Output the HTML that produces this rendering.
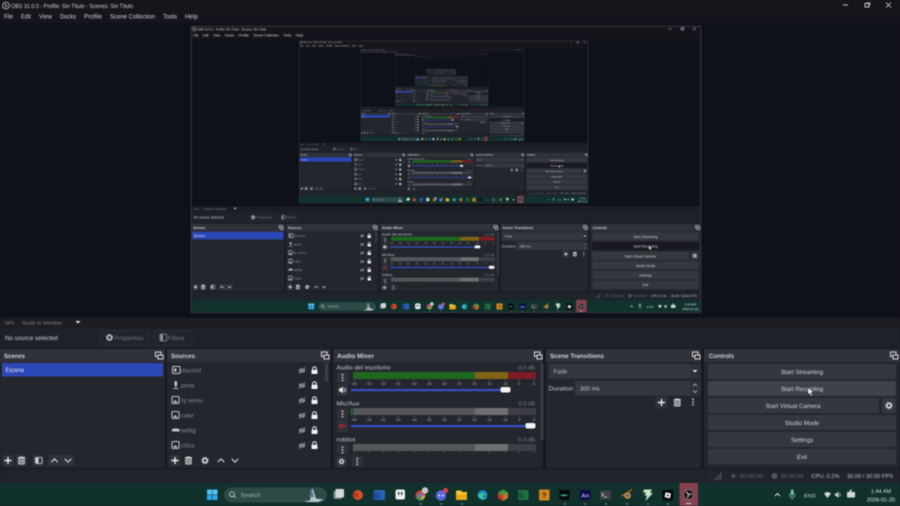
<!DOCTYPE html>
<html><head><meta charset="utf-8"><title>OBS 31.0.0</title>
<style>
html,body{margin:0;padding:0;background:#15161c;width:900px;height:506px;overflow:hidden}
svg{display:block;filter:blur(.5px)}
text{font-family:"Liberation Sans",sans-serif;text-rendering:geometricPrecision}
</style></head><body>
<svg xmlns="http://www.w3.org/2000/svg" width="900" height="506" viewBox="0 0 900 506">
<defs>
<g id="float"><rect x="-3.5" y="-3.5" width="5.5" height="4.5" fill="none" stroke="#d8d8dc" stroke-width="1"/><rect x="-1" y="-.5" width="5" height="4" fill="#2e3038" stroke="#d8d8dc" stroke-width="1"/></g>
<g id="eye"><path d="M-3.5 0C-1.5-3 1.5-3 3.5 0C1.5 3-1.5 3-3.5 0Z" fill="#9a9ba0"/><path d="M-3 3L3-3" stroke="#24262e" stroke-width="1.6"/><path d="M-3 3L3-3" stroke="#c4c5c9" stroke-width=".7"/></g>
<g id="lock"><rect x="-3" y="-.8" width="6" height="4.3" rx=".6" fill="#f0f0f2"/><path d="M-1.8-.8V-2A1.8 1.8 0 0 1 1.8-2V-.8" fill="none" stroke="#f0f0f2" stroke-width="1"/></g>
<g id="plus"><path d="M-3.5 0H3.500M0-3.500V3.500" stroke="#ececf0" stroke-width="1.4"/></g>
<g id="trash"><path d="M-3.500-3H3.500M-1.300-3.600H1.300" stroke="#d4d5da" stroke-width=".9"/><rect x="-2.800" y="-2.400" width="5.600" height="6" rx=".7" fill="#6a6c72" stroke="#d4d5da" stroke-width=".9"/><path d="M-1-1V2.400M1-1V2.400" stroke="#d4d5da" stroke-width=".7"/></g>
<g id="gear"><circle r="2.100" fill="none" stroke="#dcdce0" stroke-width="1.500"/><circle r="3.200" fill="none" stroke="#dcdce0" stroke-width="1" stroke-dasharray="1.200 1.300"/></g>
<g id="up"><path d="M-3.200 1.600L0-1.600L3.200 1.600" fill="none" stroke="#dcdde1" stroke-width="1.100"/></g>
<g id="down"><path d="M-3.200-1.600L0 1.600L3.200-1.600" fill="none" stroke="#dcdde1" stroke-width="1.100"/></g>
<g id="dots"><circle cy="-2.800" r=".85" fill="#e4e4e8"/><circle r=".85" fill="#e4e4e8"/><circle cy="2.800" r=".85" fill="#e4e4e8"/></g>
<g id="img"><rect x="-3.500" y="-3.500" width="7" height="7" rx="1" fill="none" stroke="#c4c5c9" stroke-width="1"/><path d="M-2.500 2.500L-.5 0L2.500 2.500Z" fill="#c4c5c9"/></g>
<g id="ticks" font-size="3.800" fill="#a6a7ac" text-anchor="middle">
<text x="354" y="4">-60</text><text x="369" y="4">-55</text><text x="383" y="4">-50</text><text x="398" y="4">-45</text><text x="414" y="4">-40</text><text x="429" y="4">-35</text><text x="444" y="4">-30</text><text x="459" y="4">-25</text><text x="474" y="4">-20</text><text x="489" y="4">-15</text><text x="505" y="4">-10</text><text x="519" y="4">-5</text><text x="534" y="4">0</text>
<path d="M354-1V0M369-1V0M383-1V0M398-1V0M414-1V0M429-1V0M444-1V0M459-1V0M474-1V0M489-1V0M505-1V0M519-1V0M534-1V0" stroke="#a6a7ac" stroke-width=".5"/>
</g>
<g id="cursor"><path d="M808 387.500V394.500L809.700 393L811 396L812.300 395.400L811 392.600L813.200 392.400Z" fill="#fff" stroke="#222" stroke-width=".4"/></g>

<g id="ui">
<rect width="900" height="506" fill="#15161c"/>
<!-- title + menu -->
<circle cx="6" cy="5.500" r="3.400" fill="none" stroke="#c8c8cc" stroke-width=".8"/><path d="M6 5.500L4.500 3.500M6 5.500L8 5.200M6 5.500L5.500 8" stroke="#c8c8cc" stroke-width=".7"/>
<text x="11" y="7.800" font-size="6" fill="#d0d0d4" textLength="122" lengthAdjust="spacingAndGlyphs">OBS 31.0.0 - Profile: Sin Título - Scenes: Sin Título</text>
<g font-size="6.400" fill="#d0d1d5">
<text x="4" y="18.600" textLength="9" lengthAdjust="spacingAndGlyphs">File</text><text x="21" y="18.600" textLength="10" lengthAdjust="spacingAndGlyphs">Edit</text><text x="39" y="18.600" textLength="13" lengthAdjust="spacingAndGlyphs">View</text><text x="60" y="18.600" textLength="16" lengthAdjust="spacingAndGlyphs">Docks</text><text x="84" y="18.600" textLength="18" lengthAdjust="spacingAndGlyphs">Profile</text><text x="110" y="18.600" textLength="45" lengthAdjust="spacingAndGlyphs">Scene Collection</text><text x="163" y="18.600" textLength="14" lengthAdjust="spacingAndGlyphs">Tools</text><text x="185" y="18.600" textLength="13" lengthAdjust="spacingAndGlyphs">Help</text>
</g>
<path d="M843 5H848" stroke="#c8c8cc" stroke-width="1"/><rect x="865" y="3.500" width="4" height="3.500" fill="none" stroke="#c8c8cc" stroke-width="1"/><path d="M867 3V2.500H870V5.500" fill="none" stroke="#c8c8cc" stroke-width=".6"/><path d="M886 2.500L891 7.500M891 2.500L886 7.500" stroke="#c8c8cc" stroke-width=".8"/>
<!-- preview -->
<rect x="0" y="23" width="900" height="295" fill="#0f1118"/>
<!-- scale row -->
<rect x="0" y="318" width="900" height="10" fill="#1c1e24"/>
<text x="5" y="324.300" font-size="4.800" fill="#85868c">56%</text><text x="22" y="324.300" font-size="4.800" fill="#85868c" textLength="40" lengthAdjust="spacingAndGlyphs">Scale to Window</text>
<path d="M75.500 321H80.500L78 323.500Z" fill="#e4e4e8"/>
<!-- context bar -->
<rect x="0" y="328" width="900" height="20" fill="#1f2128"/>
<text x="5" y="340" font-size="6.300" fill="#ccccd0" textLength="53" lengthAdjust="spacingAndGlyphs">No source selected</text>
<rect x="100.500" y="330.500" width="49" height="15" rx="2" fill="#22242b" stroke="#2c2e35" stroke-width=".8"/>
<use href="#gear" x="109.500" y="337.500" opacity=".85"/>
<text x="114.500" y="340" font-size="6" fill="#74757c" textLength="29" lengthAdjust="spacingAndGlyphs">Properties</text>
<rect x="153.500" y="330.500" width="38" height="15" rx="2" fill="#22242b" stroke="#2c2e35" stroke-width=".8"/>
<rect x="160" y="334" width="6.500" height="7" rx=".8" fill="none" stroke="#8e8f95" stroke-width=".8"/><rect x="160.500" y="334.500" width="2.600" height="6" fill="#8e8f95"/>
<text x="167.500" y="340" font-size="6" fill="#74757c" textLength="17" lengthAdjust="spacingAndGlyphs">Filters</text>
<!-- docks -->
<rect x="0" y="348" width="900" height="120" fill="#17181e"/>
<g fill="#24262e"><rect x="0" y="349" width="165" height="119" rx="1.500"/><rect x="167" y="349" width="163.500" height="119" rx="1.500"/><rect x="333" y="349" width="210" height="119" rx="1.500"/><rect x="546" y="349" width="155" height="119" rx="1.500"/><rect x="704" y="349" width="196" height="119" rx="1.500"/></g>
<g fill="#30323b"><rect x="0" y="349" width="165" height="13"/><rect x="167" y="349" width="163.500" height="13"/><rect x="333" y="349" width="210" height="13"/><rect x="546" y="349" width="155" height="13"/><rect x="704" y="349" width="196" height="13"/></g>
<g font-size="6.300" font-weight="bold" fill="#d0d1d5">
<text x="4" y="358" textLength="21" lengthAdjust="spacingAndGlyphs">Scenes</text><text x="171" y="358" textLength="24" lengthAdjust="spacingAndGlyphs">Sources</text><text x="337" y="358" textLength="37" lengthAdjust="spacingAndGlyphs">Audio Mixer</text><text x="550" y="358" textLength="54" lengthAdjust="spacingAndGlyphs">Scene Transitions</text><text x="709" y="358" textLength="25" lengthAdjust="spacingAndGlyphs">Controls</text>
</g>
<use href="#float" x="159" y="355.500"/><use href="#float" x="325" y="355.500"/><use href="#float" x="538" y="355.500"/><use href="#float" x="696" y="355.500"/><use href="#float" x="894" y="355.500"/>
<!-- scenes -->
<rect x="2" y="363" width="161" height="13.500" fill="#2b47b8"/>
<text x="5.500" y="372.200" font-size="6.300" fill="#e6e7ee" textLength="18.500" lengthAdjust="spacingAndGlyphs">Escena</text>
<rect x="3" y="455" width="11" height="11" rx="2" fill="#30323b"/><rect x="16" y="455" width="11" height="11" rx="2" fill="#30323b"/><rect x="33" y="455" width="11" height="11" rx="2" fill="#30323b"/><rect x="48" y="455" width="26" height="11" rx="2" fill="#30323b"/>
<use href="#plus" x="8" y="460.500"/><use href="#trash" x="21.500" y="460.500"/><rect x="35.500" y="457.500" width="6.500" height="6" rx=".8" fill="none" stroke="#d4d5da" stroke-width=".8"/><rect x="36" y="458" width="2.500" height="5" fill="#d4d5da"/><use href="#up" x="54.500" y="460.500"/><use href="#down" x="68" y="460.500"/>
<!-- sources -->
<g font-size="6.300" fill="#85868c">
<text x="181" y="372.500" textLength="20" lengthAdjust="spacingAndGlyphs">discord</text><text x="181" y="387.500" textLength="13.500" lengthAdjust="spacingAndGlyphs">pene</text><text x="181" y="402.500" textLength="22" lengthAdjust="spacingAndGlyphs">hj reimu</text><text x="181" y="417.500" textLength="12.500" lengthAdjust="spacingAndGlyphs">cake</text><text x="181" y="432.500" textLength="15" lengthAdjust="spacingAndGlyphs">iwbtg</text><text x="181" y="447.500" textLength="13.500" lengthAdjust="spacingAndGlyphs">chica</text>
</g>
<rect x="172.500" y="366.500" width="7.500" height="7" rx=".8" fill="none" stroke="#c8c9ce" stroke-width="1"/><rect x="174" y="368.500" width="2.500" height="3" fill="#c8c9ce"/>
<rect x="174.500" y="381" width="2.600" height="5" rx="1.300" fill="#c4c5c9"/><path d="M173 388.500H178.500M175.800 386V388.500" stroke="#c4c5c9" stroke-width=".8"/>
<use href="#img" x="175.500" y="400"/><use href="#img" x="175.500" y="415"/><use href="#img" x="175.500" y="445"/>
<path d="M172 429.500C173 428 178 428 179.500 429.500L180 431L178.500 431.500H173L171.700 431Z" fill="#c4c5c9"/>
<g><use href="#eye" x="302" y="370.500"/><use href="#lock" x="314.500" y="370.500"/><use href="#eye" x="302" y="385.500"/><use href="#lock" x="314.500" y="385.500"/><use href="#eye" x="302" y="400.500"/><use href="#lock" x="314.500" y="400.500"/><use href="#eye" x="302" y="415.500"/><use href="#lock" x="314.500" y="415.500"/><use href="#eye" x="302" y="430.500"/><use href="#lock" x="314.500" y="430.500"/><use href="#eye" x="302" y="445.500"/><use href="#lock" x="314.500" y="445.500"/></g>
<rect x="325" y="363" width="3" height="19" rx="1.500" fill="#3c3e47"/>
<rect x="169.500" y="455" width="11" height="11" rx="2" fill="#30323b"/>
<use href="#plus" x="175" y="460.500"/><use href="#trash" x="188.500" y="460.500"/><use href="#gear" x="205" y="460.500"/><use href="#up" x="221" y="460.500"/><use href="#down" x="235" y="460.500"/>
<!-- mixer -->
<g font-size="6.100" fill="#c6c7cb">
<text x="336.500" y="369.500" textLength="54" lengthAdjust="spacingAndGlyphs">Audio del escritorio</text><text x="336.500" y="405.500" textLength="23" lengthAdjust="spacingAndGlyphs">Mic/Aux</text><text x="336.500" y="441.500" textLength="19" lengthAdjust="spacingAndGlyphs">roblox</text>
</g>
<g font-size="5.800" fill="#7a7b81" text-anchor="end"><text x="535" y="369.500">-3.0 dB</text><text x="535" y="405.500">0.0 dB</text><text x="535" y="441.500">0.0 dB</text></g>
<rect x="353" y="372" width="122" height="7" fill="#1d6a1e"/><rect x="475" y="372" width="33" height="7" fill="#7e6414"/><rect x="508" y="372" width="28" height="7" fill="#7d1c26"/>
<rect x="353" y="408" width="122" height="7" fill="#55565a"/><rect x="475" y="408" width="33" height="7" fill="#6e6f72"/><rect x="508" y="408" width="28" height="7" fill="#3e3f44"/><rect x="351" y="408" width="1" height="7" fill="#2d8a30"/>
<rect x="353" y="444" width="122" height="7" fill="#55565a"/><rect x="475" y="444" width="33" height="7" fill="#6e6f72"/><rect x="508" y="444" width="28" height="7" fill="#3e3f44"/>
<use href="#ticks" y="381"/><use href="#ticks" y="417"/>
<path d="M354 452V453M369 452V453M383 452V453M398 452V453M414 452V453M429 452V453M444 452V453M459 452V453M474 452V453M489 452V453M505 452V453M519 452V453M534 452V453" stroke="#a6a7ac" stroke-width=".6"/>
<rect x="337" y="372" width="11" height="11" rx="2" fill="#30323b"/><use href="#dots" x="342.500" y="377.500"/>
<rect x="337" y="408" width="11" height="11" rx="2" fill="#30323b"/><use href="#dots" x="342.500" y="414"/>
<rect x="337" y="444" width="11" height="10" rx="2" fill="#30323b"/><use href="#dots" x="342.500" y="450"/>
<rect x="337" y="384" width="11" height="12" rx="2" fill="#30323b"/><path d="M339 388.500H340.500L343 386.500V393.500L340.500 391.500H339Z" fill="#e4e4e8"/><path d="M344 388.500Q345.500 390 344 391.500M345 387.500Q347 390 345 392.500" fill="none" stroke="#e4e4e8" stroke-width=".6"/>
<rect x="337" y="420" width="11" height="12" rx="2" fill="#30323b"/><path d="M339 424.800H340.500L342.700 423V429L340.500 427.200H339Z" fill="#b3203a"/><path d="M343.500 424.800L345.800 427.200M345.800 424.800L343.500 427.200" stroke="#b3203a" stroke-width=".7"/>
<rect x="351" y="389" width="155" height="2.200" fill="#3450c8"/><rect x="351" y="425" width="180" height="2.200" fill="#3450c8"/>
<rect x="500.500" y="387" width="10" height="5.500" rx="2" fill="#f4f4f6"/><rect x="525.500" y="423" width="10" height="5.500" rx="2" fill="#f4f4f6"/>
<rect x="540.500" y="363" width="3" height="77" rx="1.500" fill="#3a3c45"/>
<rect x="336" y="456" width="11" height="11" rx="2" fill="#30323b"/><use href="#gear" transform="translate(341.500 461.500) scale(.8)"/>
<rect x="352" y="456" width="11" height="11" rx="2" fill="#30323b"/><use href="#dots" x="357.300" y="461.500"/>
<!-- transitions -->
<rect x="549" y="364" width="152" height="14.500" rx="1.500" fill="#35373f"/><rect x="690" y="364" width="11" height="14.500" fill="#2e3038"/>
<text x="553.500" y="373.500" font-size="6" fill="#b6b7bb">Fade</text><path d="M692.500 370H697.500L695 372.500Z" fill="#e4e4e8"/>
<text x="548.500" y="390.500" font-size="6.100" fill="#c6c7cb" textLength="25" lengthAdjust="spacingAndGlyphs">Duration</text>
<rect x="575" y="381" width="126" height="14.500" rx="1.500" fill="#35373f"/><rect x="690" y="381" width="11" height="14.500" fill="#2e3038"/>
<text x="580" y="390.500" font-size="6" fill="#c6c7cb">300 ms</text>
<path d="M693 386L695 384L697 386M693 390.500L695 392.500L697 390.500" fill="none" stroke="#d0d1d5" stroke-width=".7"/>
<rect x="655.500" y="396.500" width="12" height="12" rx="2" fill="#30323b"/>
<use href="#plus" x="661.500" y="402.500"/><use href="#trash" x="677.300" y="402.500"/><use href="#dots" x="693" y="402"/>
<!-- controls -->
<g fill="#35373f">
<rect x="708" y="364" width="188" height="15" rx="1"/><rect x="708" y="398" width="171" height="15" rx="1"/><rect x="882" y="398" width="14" height="15" rx="1"/><rect x="708" y="415" width="188" height="15" rx="1"/><rect x="708" y="432" width="188" height="15" rx="1"/><rect x="708" y="449" width="188" height="15" rx="1"/>
</g>
<rect x="708" y="381" width="188" height="15" rx="1" fill="#191a20"/>
<g font-size="6.100" fill="#d4d5d9" text-anchor="middle">
<text x="802" y="374.200">Start Streaming</text><text x="793" y="408.200">Start Virtual Camera</text><text x="802" y="425.200">Studio Mode</text><text x="802" y="442.200">Settings</text><text x="802" y="459.200">Exit</text>
</g>
<text x="802" y="391.200" font-size="6.100" fill="#d4d5d9" text-anchor="middle">Start Recording</text>
<use href="#gear" x="889" y="405.500"/>
<use href="#cursor"/>
<!-- status bar -->
<rect x="0" y="468" width="900" height="15" fill="#21232a"/>
<rect x="0" y="468" width="900" height="1" fill="#17181e"/>
<path d="M710.500 469V482M726 469V482M766 469V482M807 469V482" stroke="#2b2d34" stroke-width=".8"/>
<path d="M713.500 478.500H715V480H713.500ZM715.700 476.500H717.200V480H715.700ZM717.900 474.500H719.400V480H717.900ZM720.100 472.500H721.600V480H720.100Z" fill="#4a4b50"/>
<circle cx="733.500" cy="476" r="1.600" fill="#5c5d62"/><circle cx="733.500" cy="476" r="3" fill="none" stroke="#3c3d42" stroke-width=".5"/>
<circle cx="774.500" cy="476" r="3" fill="#56575c"/>
<g font-size="5.800" fill="#6d6e74"><text x="740" y="478">00:00:00</text><text x="781" y="478">00:00:00</text></g>
<g font-size="5.800" fill="#c4c5c9"><text x="811.500" y="478" textLength="28" lengthAdjust="spacingAndGlyphs">CPU: 0.2%</text><text x="847" y="478" textLength="46" lengthAdjust="spacingAndGlyphs">30.00 / 30.00 FPS</text></g>
<!-- taskbar -->
<rect x="0" y="483" width="900" height="23" fill="#11312d"/>
<g fill="#4fc3f7"><rect x="207" y="489.500" width="5" height="5"/><rect x="212.500" y="489.500" width="5" height="5"/><rect x="207" y="495" width="5" height="5" fill="#31a8ea"/><rect x="212.500" y="495" width="5" height="5" fill="#31a8ea"/></g>
<rect x="224" y="487.500" width="103" height="15" rx="7.500" fill="#2c4a46"/>
<circle cx="232" cy="494.300" r="2.400" fill="none" stroke="#dfe3e3" stroke-width=".8"/><path d="M233.700 496L235.500 497.800" stroke="#dfe3e3" stroke-width=".8"/>
<text x="240.500" y="497" font-size="6.100" fill="#a9b3b3" textLength="20" lengthAdjust="spacingAndGlyphs">Search</text>
<path d="M304 501L310 500.500L312.500 488L316 498.500L324 499.500L318 502H308Z" fill="#b8c6cc"/><path d="M311 488L314 497H309Z" fill="#5d6c90"/>
<!-- taskbar icons -->
<rect x="333.500" y="491" width="8" height="8" rx="1" fill="#7d8888"/><rect x="335.500" y="489" width="8.500" height="8.500" rx="1" fill="#d4d8d8"/>
<circle cx="358" cy="495" r="5" fill="#d0502c"/><rect x="353" y="492.500" width="5" height="5" fill="#b8381c"/>
<rect x="374" y="490" width="11" height="10" rx="1" fill="#2a62b5"/><rect x="373" y="492.500" width="6.500" height="6.500" fill="#1c4c96"/>
<rect x="395.500" y="489.500" width="9.500" height="10" rx="2" fill="#eef0f0"/><rect x="398" y="492" width="1.300" height="3" fill="#222"/><rect x="401" y="492" width="1.300" height="3" fill="#222"/>
<circle cx="420.500" cy="495.500" r="5" fill="#d7432f"/><path d="M420.500 495.500L416 498L419 500.500H422Z" fill="#3c9a4c"/><path d="M420.500 495.500L425.500 495.500L422 500.500Z" fill="#e8b818"/><circle cx="420.500" cy="495.500" r="2.200" fill="#4285e6"/><circle cx="425" cy="490.500" r="3.200" fill="#c8c8c8"/>
<circle cx="441" cy="495.500" r="5.200" fill="#5a66e0"/><circle cx="439.200" cy="495.500" r=".9" fill="#fff"/><circle cx="442.800" cy="495.500" r=".9" fill="#fff"/><circle cx="445.500" cy="490.500" r="2.500" fill="#e0404c"/>
<path d="M456 490.500H461L462.500 492H467V499.500H456Z" fill="#f3c431"/><rect x="456" y="494.500" width="11" height="5.500" fill="#e8a912"/>
<circle cx="482.500" cy="495" r="5" fill="#1686c8"/><path d="M478 496Q482 490 487 495Q484 493.500 482.500 496Q483 499 487 498Q483 501.500 478 496Z" fill="#3ec88e"/>
<path d="M503 489.500L508 492.500V498L503 501L498 498V492.500Z" fill="#c4762a"/><path d="M503 489.500L508 492.500L503 495.500L498 492.500Z" fill="#3e9a3c"/><path d="M498 492.500L503 495.500V501L498 498Z" fill="#c8342c"/>
<rect x="518" y="490" width="10.500" height="10" rx="1" fill="#1f7244"/><rect x="518" y="492.500" width="5.500" height="5.500" fill="#135c33"/>
<rect x="539" y="489.500" width="10.500" height="11" rx="1" fill="#d4861c"/><text x="544.300" y="498.200" font-size="7.500" font-weight="bold" fill="#2a1c08" text-anchor="middle">?</text>
<rect x="559.500" y="490" width="10" height="10" fill="#050608"/><path d="M561 494.500L562.500 496L564 494.500L565.500 496L567.500 494.500" fill="none" stroke="#3cd0c4" stroke-width=".9"/>
<rect x="580" y="490" width="10.500" height="10" rx="1" fill="#0a0c44"/><text x="585.200" y="497.500" font-size="6" font-weight="bold" fill="#a8a4f0" text-anchor="middle">An</text>
<rect x="600" y="490.500" width="11" height="9" fill="#3e4246"/><path d="M601.500 493L603.500 494.700L601.500 496.400M604 497H607" fill="none" stroke="#eee" stroke-width=".7"/>
<circle cx="627.500" cy="495.500" r="2.500" fill="#2f6fb0" stroke="#ee8a1c" stroke-width="1.600"/><path d="M621.500 496L625 494M628 492L632 489.500" stroke="#ee8a1c" stroke-width="1"/>
<path d="M644 489.500H652L650 493H653L645.500 501L647 495.500H644.500L646 492.500H643Z" fill="#c8e8c0"/>
<rect x="662.500" y="490" width="10.500" height="10.500" rx="1" fill="#040406"/><rect x="665" y="492.800" width="5.500" height="5" fill="#f4f4f4" transform="rotate(12 667.700 495.300)"/><rect x="667" y="494.600" width="1.500" height="1.500" fill="#040406"/>
<rect x="679.500" y="483" width="18.500" height="23" rx="1" fill="#84404e"/>
<circle cx="688.500" cy="494.500" r="5" fill="#181418" stroke="#c8b0b4" stroke-width=".5"/><path d="M688.500 494.500L686 491.500M688.500 494.500L692 494M688.500 494.500L687.500 498" stroke="#d8d0d2" stroke-width="1"/>
<rect x="686" y="503" width="5" height="1" fill="#d8d0d2"/>
<g fill="#8f9a9a"><rect x="420" y="503.500" width="2" height="1"/><rect x="440" y="503.500" width="2" height="1"/><rect x="461" y="503.500" width="2" height="1"/><rect x="564" y="503.500" width="2" height="1"/><rect x="584" y="503.500" width="2" height="1"/><rect x="605" y="503.500" width="2" height="1"/><rect x="626" y="503.500" width="2" height="1"/><rect x="647" y="503.500" width="2" height="1"/><rect x="667" y="503.500" width="2" height="1"/></g>
<!-- tray -->
<path d="M775 496L777.500 493.500L780 496" fill="none" stroke="#e4e8e8" stroke-width=".9"/>
<rect x="790.800" y="489.500" width="2.800" height="6" rx="1.400" fill="#6fc6a8"/><path d="M789.500 493.500Q789.500 497.500 792.200 497.500Q795 497.500 795 493.500M792.200 497.500V500" fill="none" stroke="#6fc6a8" stroke-width=".7"/>
<text x="804" y="497.500" font-size="5.300" fill="#c4cccc" textLength="12" lengthAdjust="spacingAndGlyphs">ENG</text>
<path d="M824 493.500Q827.500 490.500 831 493.500L827.500 498Z" fill="#d0d8d8"/>
<path d="M835 493.500H836.500L838.500 491.500V498L836.500 496H835Z" fill="#d0d8d8"/><path d="M839.500 493Q841 494.700 839.500 496.500" fill="none" stroke="#d0d8d8" stroke-width=".7"/>
<rect x="847" y="492" width="8" height="5.500" rx=".7" fill="#d0d8d8"/><path d="M849 492L850.500 489.500H852L851 492" fill="#d0d8d8"/>
<g font-size="5.500" fill="#dce2e2" text-anchor="middle"><text x="881" y="493">1:44 AM</text><text x="881" y="501.500">2026-01-20</text></g>
</g>

<g id="lvl"><use href="#ui"/><rect x=".5" y=".5" width="899" height="505" fill="none" stroke="#33353a" stroke-width="2"/></g>
</defs>

<use href="#ui"/>
<rect x="708" y="381" width="188" height="15" rx="1" fill="#3f414b"/>
<text x="802" y="391.200" font-size="6.100" fill="#d4d5d9" text-anchor="middle">Start Recording</text>
<use href="#cursor"/>

<use href="#lvl" transform="translate(191 26) scale(.5667)"/>
<use href="#lvl" transform="translate(299.240 40.730) scale(.32115)"/>
<use href="#lvl" transform="translate(360.580 49.080) scale(.18200)"/>
<use href="#lvl" transform="translate(395.340 53.810) scale(.10314)"/>
<use href="#lvl" transform="translate(415.040 56.490) scale(.05845)"/>
<use href="#lvl" transform="translate(426.200 58.010) scale(.03312)"/>
</svg>
</body></html>
